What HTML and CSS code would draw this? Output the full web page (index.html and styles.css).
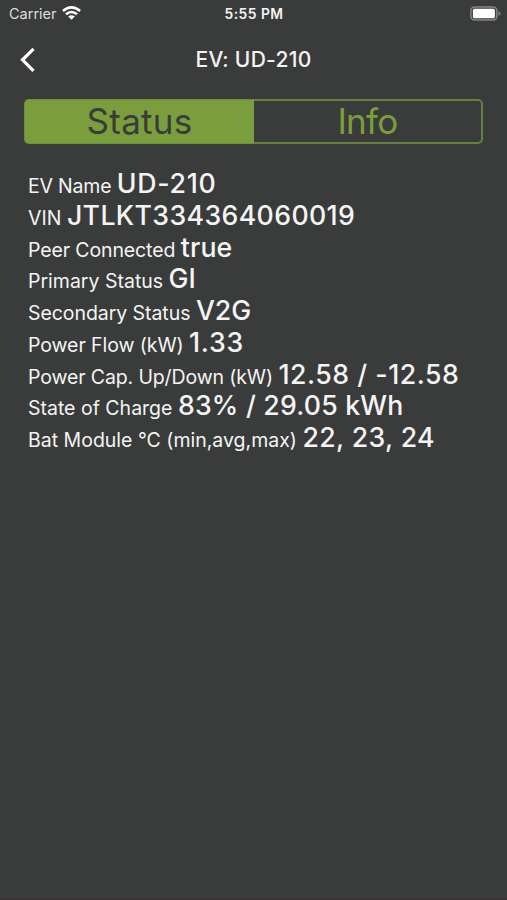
FILE: index.html
```html
<!DOCTYPE html>
<html lang="en">
<head>
<meta charset="utf-8">
<title>EV: UD-210</title>
<link rel="stylesheet" href="styles.css">
</head>
<body>
<header class="statusbar">
  <div class="carrier"><span>Carrier</span>
    <svg class="wifi" width="19" height="14" viewBox="0 0 19 14"><g fill="none" stroke="#fff" stroke-width="2.500"><path d="M.9 5Q9.500-2.300 18.100 5"/><path d="M4 8.300Q9.500 3.600 15 8.300"/></g><path fill="#fff" d="M6.200 10.600Q9.500 7.900 12.800 10.600L9.500 13.800Z"/></svg>
  </div>
  <div class="clock">5:55 PM</div>
  <svg class="battery" width="31" height="15" viewBox="0 0 31 15"><rect x=".9" y=".9" width="26" height="13.200" rx="3.800" fill="none" stroke="#858686" stroke-width="1.500"/><rect x="2.900" y="2.700" width="22" height="9.600" rx="1.500" fill="#fff"/><path d="M28.500 5.200Q30.500 6 30.500 7.500T28.500 9.800Z" fill="#858686"/></svg>
</header>
<nav class="navbar">
  <svg class="back" width="16" height="26" viewBox="0 0 16 26"><path d="M13.500 1.800 2.500 12.800 13.500 23.800" fill="none" stroke="#fff" stroke-width="3.200"/></svg>
  <h1>EV: UD-210</h1>
</nav>
<div class="segments">
  <button class="segment selected">Status</button>
  <button class="segment info">Info</button>
</div>
<main class="details">
  <p class="name"><span>EV Name</span> <b>UD-210</b></p>
  <p class="vin"><span>VIN</span> <b>JTLKT334364060019</b></p>
  <p class="peer"><span>Peer Connected</span> <b>true</b></p>
  <p class="primary"><span>Primary Status</span> <b>GI</b></p>
  <p class="secondary"><span>Secondary Status</span> <b>V2G</b></p>
  <p class="flow"><span>Power Flow (kW)</span> <b>1.33</b></p>
  <p class="capacity"><span>Power Cap. Up/Down (kW)</span> <b>12.58 / -12.58</b></p>
  <p class="charge"><span>State of Charge</span> <b>83% / 29.05 kWh</b></p>
  <p class="battery-temp"><span>Bat Module °C (min,avg,max)</span> <b>22, 23, 24</b></p>
</main>
</body>
</html>
```
FILE: styles.css
```css
* { box-sizing: border-box; }
body {
  margin: 0;
  height: 900px;
  overflow: hidden;
  background: #3a3c3b;
  border-bottom: 1px solid #3c2f38;
  color: #f4f4f4;
  font-family: Inter, "Liberation Sans", sans-serif;
}
.statusbar {
  display: grid;
  grid-template-columns: 1fr auto 1fr;
  align-items: center;
  height: 27px;
  padding: 0 6px 0 9px;
}
.carrier { display: flex; align-items: center; gap: 5px; font-size: 14.500px; color: #ddd; }
.wifi { display: block; margin-top: -1px; }
.clock { font-size: 13.800px; font-weight: 600; letter-spacing: .5px; margin-right: 2px; }
.battery { justify-self: end; }
.navbar {
  display: grid;
  grid-template-columns: 20px 1fr 20px;
  align-items: center;
  height: 66px;
  padding: 0 20px;
}
.back { display: block; }
h1 {
  margin: -2px 0 0;
  text-align: center;
  font-size: 21px;
  font-weight: 500;
  letter-spacing: .28px;
}
.segments {
  display: flex;
  height: 45px;
  margin: 6px 24px 0;
}
.segment {
  flex: 1;
  padding: 0;
  border: 2px solid #66803f;
  border-left: 0;
  border-radius: 0 5px 5px 0;
  background: none;
  color: #7a9e3b;
  font: 400 35px/41px Inter, sans-serif;
}
.selected {
  flex: 0 0 230px;
  border: 1px solid #6f8f3d;
  border-right: 0;
  border-radius: 5px 0 0 5px;
  background: #7a9e3b;
  color: #3a3c3b;
  letter-spacing: .25px;
}
.info { letter-spacing: -.7px; }
.details { padding: 24px 28px 0; }
.details p {
  margin: 0;
  height: 31.750px;
  line-height: 31.750px;
  font-size: 19.500px;
  white-space: nowrap;
}
b { font-size: 26.700px; font-weight: 500; }
.name span { letter-spacing: -.2px; }
.name b { letter-spacing: .7px; }
.vin b { letter-spacing: .37px; }
.peer span { letter-spacing: -.12px; }
.peer b { letter-spacing: .15px; }
.secondary span { letter-spacing: -.06px; }
.flow span { letter-spacing: -.07px; }
.flow b { letter-spacing: .7px; }
.capacity span { letter-spacing: -.12px; }
.capacity b { letter-spacing: .52px; }
.charge b { letter-spacing: .2px; }
.battery-temp b { letter-spacing: .36px; }
```
